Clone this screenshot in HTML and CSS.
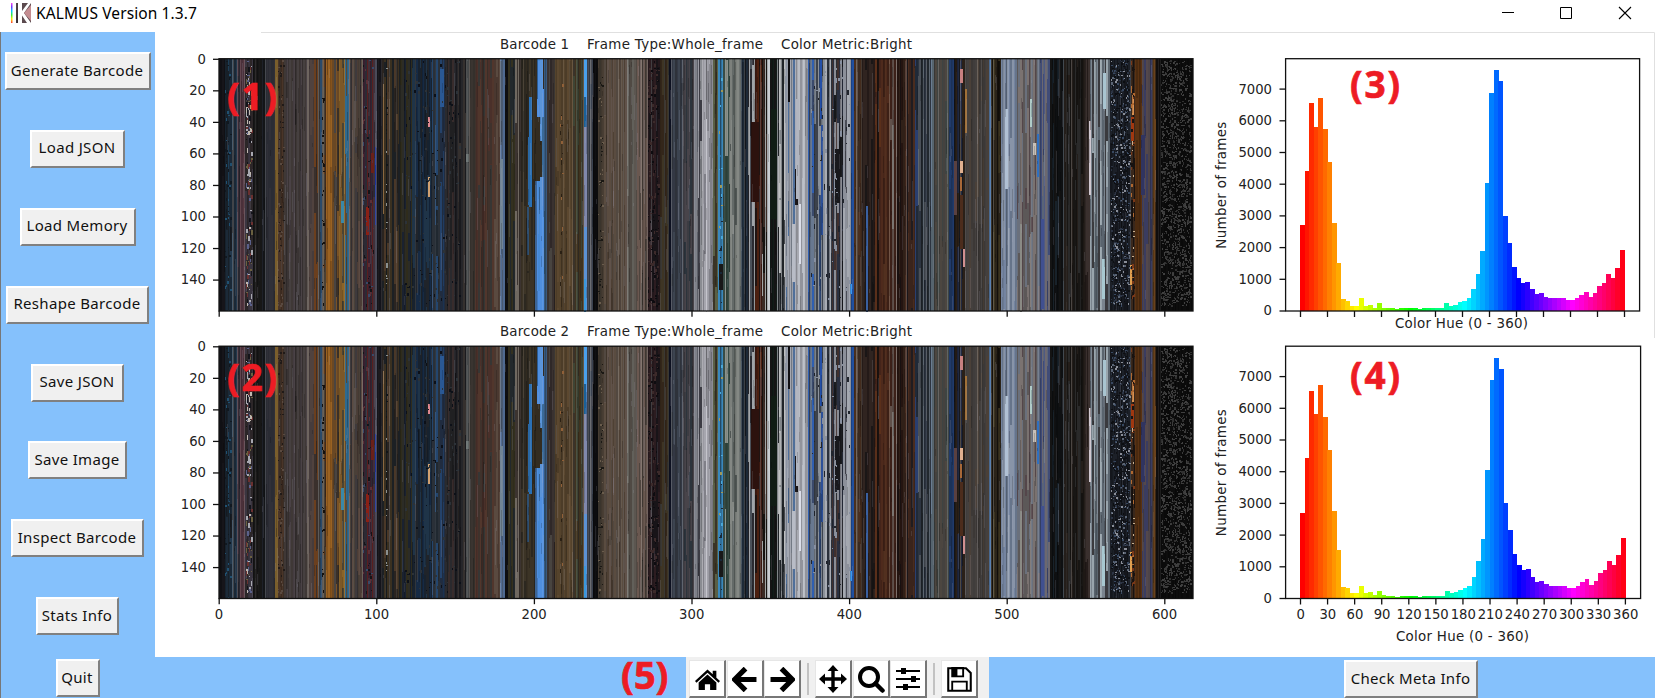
FILE: index.html
```html
<!DOCTYPE html>
<html lang="en">
<head>
<meta charset="utf-8">
<title>KALMUS Version 1.3.7</title>
<link rel="stylesheet" href="styles.css">
</head>
<body>
<div class="window">
  <header class="titlebar">
    <svg class="logo" width="20" height="20" viewBox="0 0 20 20">
      <defs><linearGradient id="rb" x1="0" y1="0" x2="0" y2="1"><stop offset="0" stop-color="#f4e"/><stop offset=".2" stop-color="#63f"/><stop offset=".4" stop-color="#0cf"/><stop offset=".6" stop-color="#3e3"/><stop offset=".8" stop-color="#fe0"/><stop offset="1" stop-color="#f33"/></linearGradient>
      <linearGradient id="dk" x1="0" y1="0" x2="1" y2="1"><stop offset="0" stop-color="#54474b"/><stop offset="1" stop-color="#221b20"/></linearGradient></defs>
      <rect width="1.500" height="20" fill="url(#rb)"/>
      <path d="M5 0h5v20H5z" fill="url(#dk)"/>
      <path d="M10 0h10v20H10z" fill="#5b4a4e"/>
      <path d="M7 0h4v8l6-8h3L13 10l7 10h-4L11 12.500V20H7z" fill="#fff"/>
      <path d="M20 2v16l-7-8z" fill="#c48d91"/>
    </svg>
    <span class="title">KALMUS Version 1.3.7</span>
    <svg class="controls" width="150" height="32" viewBox="1505 0 150 32" fill="none" stroke="#000" stroke-width="1">
      <path d="M1502 12.500h12M1560.500 7.500h11v11h-11z"/>
      <path d="M1619 7l12 12M1631 7l-12 12" stroke-width="1.100"/>
    </svg>
  </header>
  <div class="body">
    <nav class="sidebar">
      <button class="btn w146">Generate Barcode</button>
      <button class="btn w95">Load JSON</button>
      <button class="btn w116">Load Memory</button>
      <button class="btn w143">Reshape Barcode</button>
      <button class="btn w93">Save JSON</button>
      <button class="btn w99">Save Image</button>
      <button class="btn w133">Inspect Barcode</button>
      <button class="btn w83">Stats Info</button>
      <button class="btn w44 quit">Quit</button>
    </nav>
    <main class="main">
      <section class="figure">
        <div class="barcodes">
          <svg id="bar1" width="1050" height="290" viewBox="155 32 1050 290"></svg>
          <svg id="bar2" width="1050" height="335" viewBox="155 322 1050 335"></svg>
        </div>
        <div class="hists">
          <svg id="hist1" width="450" height="306" viewBox="1205 32 450 306"></svg>
          <svg id="hist2" width="450" height="319" viewBox="1205 338 450 319"></svg>
        </div>
      </section>
      <footer class="bottombar">
        <span class="mark">(5)</span>
        <div class="toolbar">
          <button class="tool"><svg viewBox="0 0 24 24"><path d="M12 2.500L0 13.500l1.400 1.500L12 5.500 22.600 15l1.400-1.500-3.500-3.300V3.500h-3.500V7z"/><path d="M12 7.200L3.500 14.800V22H9.500v-5.500h5V22h6v-7.200z"/></svg></button>
          <button class="tool"><svg viewBox="0 0 24 24"><path d="M13 1.500L2.500 12 13 22.500M3.500 12H23.500" fill="none" stroke="#000" stroke-width="5"/></svg></button>
          <button class="tool"><svg viewBox="0 0 24 24"><path d="M11 1.500L21.500 12 11 22.500M20.500 12H.5" fill="none" stroke="#000" stroke-width="5"/></svg></button>
          <i class="sep"></i>
          <button class="tool"><svg class="wide" viewBox="0 0 28 28"><path d="M14 0l5.500 6H15.700v6.300H22V8.500L28 14l-6 5.500v-3.800h-6.300V22h3.800L14 28l-5.500-6h3.800v-6.300H6v3.800L0 14l6-5.500v3.800h6.300V6H8.500z"/></svg></button>
          <button class="tool"><svg class="wide" viewBox="0 0 28 28"><circle cx="12" cy="12" r="9" fill="none" stroke="#000" stroke-width="4"/><path d="M18.500 18.500l7 7" stroke="#000" stroke-width="4.500" stroke-linecap="round"/></svg></button>
          <button class="tool"><svg class="wide" viewBox="0 0 28 28"><path d="M2 6h24M2 14h24M2 22h24" stroke="#000" stroke-width="2.200"/><path d="M7 3h5v6H7zM17 11h5v6h-5zM9 19h5v6H9z"/></svg></button>
          <i class="sep sep2"></i>
          <button class="tool"><svg viewBox="0 0 24 24"><path d="M1.200 1.200h17l4.600 4.600v17H1.200z" fill="none" stroke="#000" stroke-width="2"/><path d="M5 1h10.500v8H5zM5 22v-8h14v8" fill="none" stroke="#000" stroke-width="1.800"/><path d="M5 1h5v8H5z"/></svg></button>
        </div>
        <button class="btn meta w134">Check Meta Info</button>
      </footer>
    </main>
  </div>
</div>
<script src="charts.js"></script>
</body>
</html>
```
FILE: styles.css
```css
* { box-sizing: border-box; }
body { margin: 0; background: #fff; overflow: hidden; }
.window { width: 1655px; height: 698px; display: flex; flex-direction: column; }
.titlebar { height: 32px; display: flex; align-items: center; padding-left: 11px; background: #fff; }
.logo { margin-top: -7px; }
.title { flex: 1; margin: -7px 0 0 5px; font: 15.5px/24px "Noto Sans", sans-serif; color: #000; letter-spacing: 0.1px; white-space: nowrap; }
.controls { overflow: visible; }
.body { display: flex; height: 666px; border-left: 1px solid #777; }
.sidebar { width: 154px; padding: 20px 1px 0 0; background: #85c1fc; display: flex; flex-direction: column; align-items: center; gap: 39.900px; }
.btn { height: 38px; flex: none; padding: 0 1px 3px 0; border: 2px solid; border-color: #fff #808080 #808080 #fff; border-radius: 0; background: #f0f0f0; color: #111; font: 15px/30px "Noto Sans", sans-serif; letter-spacing: 0.33px; white-space: nowrap; }
.quit { margin-top: -16px; }
.w146 { width: 146px; } .w95 { width: 95px; } .w116 { width: 116px; } .w143 { width: 143px; }
.w93 { width: 93px; } .w99 { width: 99px; } .w133 { width: 133px; } .w83 { width: 83px; }
.w44 { width: 44px; } .w134 { width: 134px; }
.main { width: 1500px; display: flex; flex-direction: column; }
.figure { display: flex; height: 625px; background: #fff; }
.barcodes, .hists { display: flex; flex-direction: column; }
.barcodes svg, .hists svg { display: block; }
.figure text { font-family: "DejaVu Sans", sans-serif; font-size: 13.2px; fill: #222; }
.figure text.label { font-size: 13.4px; }
.figure text.note { font-family: "Open Sans", "Noto Sans", sans-serif; font-weight: 700; font-size: 37px; fill: #ed1c24; stroke: #ed1c24; stroke-width: 0.7px; }
.axis { fill: none; stroke: #111; stroke-width: 1.3; }
.hairline { fill: none; stroke: #e0e0e0; }
.stripes { shape-rendering: crispEdges; }
.bottombar { height: 41px; display: flex; align-items: flex-start; background: #85c1fc; }
.mark { width: 531px; padding-left: 466px; font: 700 38px/34px "Open Sans", "Noto Sans", sans-serif; color: #ed1c24; -webkit-text-stroke: 0.7px #ed1c24; }
.toolbar { width: 303px; height: 41px; padding: 3px 0 0 3px; display: flex; background: #f0f0f0; }
.tool { width: 37px; height: 38px; margin-right: 0.6px; padding: 1px 0 0; display: flex; align-items: center; justify-content: center; flex: none; background: #fff; border: 1px solid; border-width: 1px 2px 2px 1px; border-color: #e6e6e6 #777 #777 #e6e6e6; border-radius: 0; }
.tool svg { width: 25px; height: 25px; display: block; }
.tool svg.wide { width: 28px; height: 28px; }
.sep { width: 2px; height: 32px; margin: 3px 6px 0 5.500px; background: #c2c2c2; }
.sep2 { margin-left: 5px; }
.meta { margin: 3px 0 0 355px; }
```
FILE: charts.js
```js
const NS = 'http://www.w3.org/2000/svg';
const add = (p, n, a, t) => {
  const e = document.createElementNS(NS, n);
  for (const k in a) e.setAttribute(k, a[k]);
  if (t !== undefined) e.textContent = t;
  p.appendChild(e);
  return e;
};
let seed = 7;
const rnd = () => (seed = (seed * 16807) % 2147483647) / 2147483647;

// Colour bands: start x, then the colours that alternate inside the band.
const bands = [
  [219, '#16151a', '#101014'], [225, '#1c2a38', '#182028', '#1d3d55'], [230, '#1a2836', '#22384c', '#181c22'],
  [237, '#3a2a35', '#2a2830'], [240, '#55363f', '#4a303a'], [245, '#3a3540', '#2c2628'], [253, '#171717', '#1c1a1a'],
  [262, '#1d2028', '#131518'], [266, '#2a2c34', '#303038'], [275, '#7a5e2c'], [278, '#4a3528', '#3a2e26'],
  [284, '#3f3836', '#4a4246', '#3a3434', '#464040'], [307, '#6e6560'], [309, '#463c3c', '#50423e'], [314, '#6b3f1e', '#3a302c'],
  [318, '#3a3634', '#2a4a6a'], [323, '#5c3a1c', '#3c2a20', '#4a4034'], [326, '#9a6222', '#84521c'], [332, '#6a4824', '#4a4440', '#7a5226', '#3a3028'],
  [339, '#8a6428', '#7c5828', '#4a4434'], [345, '#2f6a90', '#5a4834'], [349, '#5c4a42', '#4a4038', '#3e3a3c'],
  [363, '#3a2030', '#2c2a34', '#5a1e1e', '#40303a'], [375, '#4a4a58'], [377, '#14141a', '#1c1a1e'],
  [382, '#2a2420', '#3a3020', '#1c2024', '#4a3828'], [400, '#2f2c1c', '#2c2c26', '#1a2230'],
  [412, '#18222e', '#1f3448', '#20242a', '#162a44'], [432, '#24466e', '#2a3038', '#202830'], [440, '#24426a', '#202c40'],
  [445, '#2a2a2e', '#202022', '#382c2c'], [455, '#1a1a1e', '#26262a', '#35302e'], [466, '#55585a'], [469, '#3a3430', '#34302c'],
  [475, '#3f322c', '#4a302a', '#373634', '#51362c'], [494, '#4a3830', '#5a4a40'], [500, '#506a90', '#4a5a70'],
  [505, '#0e0e10'], [508, '#33301f', '#22282c'], [515, '#6f6860', '#3c3430'], [521, '#2c2820', '#3c3426'],
  [535, '#332c20'], [537, '#4f8fe0', '#468ad6', '#5a94d8'], [544, '#3a5a80', '#2c4a66'], [547, '#3a3230', '#484440', '#2f2828'],
  [555, '#55432c', '#4c3c28', '#5c4830'], [573, '#3a332a', '#40331f', '#3e4434'], [584, '#5c92d4'], [587, '#3a4250', '#4a4c54'],
  [593, '#0c0c0e', '#101012'], [598, '#463c32', '#3a342c'], [603, '#5a4c40', '#524840', '#4e4034', '#60524a'],
  [627, '#62605a', '#5c5650', '#504a44'], [637, '#6a5850', '#4e443e', '#726460'], [648, '#24181c', '#2c1c20', '#181418'],
  [660, '#33261a', '#3e3524', '#3a3834'], [669, '#0c1020'], [671, '#333844', '#3c4450', '#2e323a'], [683, '#3c3c42', '#48444a', '#2c343c'],
  [694, '#8a8c94', '#727680'], [698, '#9a9aa2', '#3c3c44', '#8a8c92'], [703, '#9a9aa2', '#a6a6ae', '#808088'], [713, '#5a6046', '#3a3426'], [718, '#3a88bc', '#2a5a7c'],
  [723, '#384c46', '#8a928c', '#30443c'], [730, '#7c807c', '#848884', '#646a68', '#505654'], [741, '#1c2836', '#243444', '#12161c'],
  [748, '#2a2a30', '#a0a4a8', '#4a5058'], [755, '#3a1810', '#4c2010', '#201412'], [762, '#16120f', '#3a2a24', '#a0a4a4'],
  [767, '#c8ccd0'], [770, '#121c18', '#141414'], [777, '#808488', '#202428', '#b0b2b4'], [785, '#a4a8b2', '#8c94a2', '#9a9ea8', '#4f6f9a'],
  [796, '#a8aab2', '#b8bcc4', '#92949c'], [808, '#2f5fb0', '#3a4a6c', '#687890'], [814, '#7a828c', '#3c424c', '#8a9098', '#2c4470'],
  [825, '#a8acb4', '#2a303a', '#8e949e'], [832, '#40302e', '#2a3040', '#8a8c94', '#1a1c20'], [843, '#a4a8b0', '#8c909a', '#4a4c56'],
  [851, '#2050a0'], [854, '#4a3020', '#54463c', '#3a2a20'], [862, '#241a18', '#302420', '#1a1616'], [875, '#5a2f1a', '#1a1210', '#44241a'],
  [881, '#4e2a1c', '#3c2016', '#52301f'], [890, '#3c2018', '#60504a'], [897, '#241410', '#302018', '#181010'],
  [905, '#4a2c1e', '#3a241c', '#201c20'], [915, '#2a3f70', '#202a38'], [918, '#2c3440', '#4a5058', '#22282e', '#5c6670'],
  [931, '#6a7c90', '#56646e'], [934, '#45423f', '#4c4640', '#3e4442'], [949, '#203a6a', '#1c3258'], [954, '#16181e', '#2a2018', '#202840'],
  [965, '#403d3c', '#44403e', '#4a4038', '#3c3836'], [989, '#5a80b0'], [991, '#2b241a', '#14100c', '#3c3420'], [1001, '#7484a0', '#66748a', '#8894a8'],
  [1017, '#5c5858', '#6a707c', '#7a7270', '#54464a'], [1038, '#5a6478', '#404c78', '#6c6870'], [1050, '#141414', '#0e1012', '#18222a'],
  [1064, '#241e1a', '#181614', '#2a2a2a', '#141210'], [1085, '#3a302e', '#241c1a'], [1090, '#5a646e', '#7a848e', '#3a3a3e', '#98a4ac'],
  [1110, '#14161c', '#1c2028'], [1131, '#3a281c', '#181210'], [1135, '#5a3212', '#4a2a10'], [1142, '#54484c', '#4e4448', '#3a3c60'],
  [1153, '#6a421c', '#3a2818'], [1156, '#0f0d0d'], [1160, '#0a0a0a', '#0d0d0d'], [1193]
];

// Short stretches that stand out: x, y, width, height, colour.
const spots = [
  [529, 38, 3, 110, '#2a70b4'], [528, 78, 2, 68, '#2a68a4'], [527, 148, 2, 48, '#2f4f70'],
  [537, 58, 3, 64, '#332c20'], [540, 82, 3, 36, '#332c20'], [535, 122, 2, 130, '#3c6494'], [542, 58, 2, 60, '#3a6a98'],
  [584, 0, 3, 38, '#4aa0ec'], [584, 38, 2, 30, '#1a6098'], [537, 0, 1, 40, '#2c5c94'], [543, 0, 1, 30, '#332c20'],
  [584, 68, 3, 100, '#8088ac'], [584, 220, 2, 33, '#3a98dc'], [428, 58, 2, 10, '#e08890'], [428, 118, 2, 20, '#d0a070'],
  [375, 88, 1, 78, '#1a35a0'], [366, 148, 3, 28, '#8a2015'], [371, 94, 3, 20, '#6a2018'], [500, 100, 3, 90, '#708494'],
  [788, 0, 2, 43, '#101014'], [795, 110, 3, 36, '#1a1618'], [796, 40, 3, 100, '#b2b6c0'], [792, 165, 3, 58, '#b8bcc6'],
  [835, 90, 5, 54, '#18181c'], [771, 50, 6, 110, '#101c14'], [751, 63, 8, 80, '#2c120e'], [820, 0, 2, 60, '#2450a8'],
  [821, 66, 2, 110, '#2c5098'], [866, 147, 2, 106, '#3a60a0'], [850, 225, 2, 10, '#3a98f0'], [892, 66, 2, 104, '#7a7470'],
  [960, 10, 3, 14, '#c88080'], [960, 102, 3, 12, '#e0b090'], [960, 118, 2, 14, '#a86838'], [965, 30, 2, 44, '#a07038'], [963, 190, 2, 18, '#d09090'],
  [960, 136, 3, 54, '#4c2c1c'], [954, 102, 3, 54, '#5a4040'], [1005, 50, 3, 80, '#b0c0d4'], [1037, 75, 2, 43, '#3070c0'],
  [1033, 84, 3, 12, '#c8c0b8'], [1030, 40, 2, 28, '#b0ccc8'], [1089, 62, 2, 74, '#d0c8d0'], [1103, 14, 3, 36, '#a8c4d0'],
  [1102, 200, 3, 40, '#a8c8d0'], [1131, 58, 3, 24, '#a03810'], [1132, 36, 2, 20, '#d89050'], [1130, 206, 2, 20, '#e0a050'],
  [1141, 76, 4, 60, '#303460'], [1020, 165, 2, 88, '#8a8a84'], [1041, 160, 3, 90, '#405090'], [440, 10, 4, 38, '#2a5894'],
  [341, 142, 3, 22, '#3a88a8'], [719, 205, 4, 26, '#181818'], [799, 145, 2, 60, '#dcdfea'], [706, 60, 1, 193, '#c4c4cc'],
  [383, 25, 1, 130, '#8a6840'], [466, 95, 3, 8, '#707878']
];

function buildStripes(g) {
  add(g, 'rect', { x: 219, y: 0, width: 974, height: 252, fill: '#222' });
  for (let i = 0; i < bands.length - 1; i++) {
    const [x0, ...cols] = bands[i], x1 = bands[i + 1][0];
    let x = x0, k = 0;
    while (x < x1) {
      const w = Math.min(x1 - x, rnd() < 0.45 ? 1 : 2);
      const c = cols[k++ % cols.length];
      add(g, 'rect', { x, y: 0, width: w, height: 252, fill: c });
      let runs = Math.floor(rnd() * 4);
      while (runs-- > 0 && cols.length > 1) {
        const y = Math.floor(rnd() * 235), h = Math.min(252 - y, 12 + Math.floor(rnd() * 90));
        add(g, 'rect', { x, y, width: w, height: h, fill: cols[Math.floor(rnd() * cols.length)] });
      }
      if (rnd() < 0.3) add(g, 'rect', { x, y: 0, width: 1, height: 252, fill: rnd() < 0.6 ? '#000' : '#fff', opacity: rnd() < 0.6 ? 0.18 : 0.08 });
      x += w;
    }
  }
  for (const [x, y, width, height, fill] of spots) add(g, 'rect', { x, y, width, height, fill });
  // Faint short streaks over the whole strip.
  for (let i = 0; i < 900; i++) {
    const y = Math.floor(rnd() * 240);
    add(g, 'rect', { x: 220 + Math.floor(rnd() * 938), y, width: 1, height: Math.min(252 - y, 3 + Math.floor(rnd() * 40)), fill: rnd() < 0.65 ? '#000' : '#aab', opacity: 0.16 });
  }
  speckle(g, 246, 252, 150, ['#6a6040', '#a8a8b0', '#5a608a', '#14141a', '#6a3030', '#c0b8b0'], 5);
  speckle(g, 1111, 1130, 760, ['#5a6474', '#2c3444', '#8a8e98', '#0c0e12', '#384860', '#0e1014'], 2);
  speckle(g, 1131, 1134, 50, ['#b06830', '#7a3818', '#c8b090', '#181210'], 4);
  speckle(g, 1161, 1191, 1300, ['#3a3a3a', '#404040', '#303030'], 2);
  speckle(g, 648, 659, 160, ['#0e0c10', '#3c2a2a'], 3);
  speckle(g, 598, 603, 60, ['#1a1814', '#6a5c4c'], 2);
  speckle(g, 278, 284, 80, ['#5a4a40', '#201a18'], 2);
  speckle(g, 560, 563, 18, ['#906038', '#2a2014'], 5);
  speckle(g, 386, 387, 22, ['#8a9090', '#101418'], 3);
  speckle(g, 225, 231, 60, ['#205070', '#101820'], 3);
  speckle(g, 363, 374, 60, ['#5a3038', '#141418', '#3a4868'], 4);
  speckle(g, 322, 324, 24, ['#14100c'], 4);
  speckle(g, 404, 460, 160, ['#0c1018', '#2c3238'], 3);
  speckle(g, 719, 722, 20, ['#a09858', '#4aa8d8', '#182838'], 3);
  speckle(g, 810, 850, 80, ['#8890a0', '#20242c'], 6);
}
function speckle(g, x0, x1, n, cols, h) {
  for (let i = 0; i < n; i++)
    add(g, 'rect', { x: x0 + Math.floor(rnd() * (x1 - x0)), y: 1 + Math.floor(rnd() * 246), width: rnd() < 0.4 ? 2 : 1, height: 1 + Math.floor(rnd() * h), fill: cols[Math.floor(rnd() * cols.length)] });
}

function barcode(id, top, n, labels, noteY, titleY) {
  const s = document.getElementById(id);
  if (n === 1) buildStripes(add(s, 'g', { id: 'stripes', class: 'stripes', transform: 'translate(0 59)' }));
  else add(s, 'use', { href: '#stripes', y: top - 59 });
  add(s, 'rect', { class: 'axis', x: 219, y: top, width: 974, height: 252.3 });
  add(s, 'text', { class: 'label', x: 500, y: titleY, textLength: 69 }, 'Barcode ' + n);
  add(s, 'text', { class: 'label', x: 587, y: titleY, textLength: 176 }, 'Frame Type:Whole_frame');
  add(s, 'text', { class: 'label', x: 781, y: titleY, textLength: 131 }, 'Color Metric:Bright');
  for (let v = 0; v <= 140; v += 20) {
    const y = top + 0.6 + v * 1.577;
    add(s, 'path', { class: 'axis', d: `M213 ${y}h6` });
    add(s, 'text', { x: 206, y: y + 4.4, 'text-anchor': 'end' }, v);
  }
  for (let v = 0; v <= 600; v += 100) {
    const x = 219.2 + v * 1.576;
    add(s, 'path', { class: 'axis', d: `M${x} ${top + 252}v6` });
    if (labels) add(s, 'text', { x: x - 0.3, y: 619, 'text-anchor': 'middle' }, v);
  }
  add(s, 'text', { class: 'note', x: 227, y: noteY, textLength: 50 }, `(${n})`);
}

const counts = [2700,4430,6560,5820,6720,5740,4700,2770,1520,370,330,170,170,400,170,200,100,240,100,90,90,60,90,90,80,90,60,90,90,90,90,90,240,170,200,280,320,400,690,1170,1880,4050,6880,7590,7240,3010,2150,1390,1050,890,920,690,530,560,450,410,410,410,400,340,340,400,520,600,440,560,800,890,1170,1050,1370,1920];

function histogram(id, top, n, labels, noteY, labelY) {
  const s = document.getElementById(id), base = top + 252.3, sx = labels ? 0.9025 : 0.9;
  const bw = sx * 5, g = add(s, 'g', { class: 'stripes' });
  counts.forEach((c, i) => {
    const h = c * 0.0317;
    add(g, 'rect', { x: 1300.3 + i * bw, y: base - h, width: bw + 0.3, height: h, fill: `hsl(${i * 5} 100% 50%)` });
  });
  add(s, 'rect', { class: 'axis', x: 1285.6, y: top, width: labels ? 355 : 354, height: 252.3 });
  for (let v = 0; v <= 7000; v += 1000) {
    const y = base - v * 0.0317;
    add(s, 'path', { class: 'axis', d: `M1279.500 ${y}h6` });
    add(s, 'text', { x: 1272, y: y + 4.4, 'text-anchor': 'end' }, v);
  }
  for (let v = 0; v <= 360; v += 30) {
    const x = 1300.5 + v * sx;
    add(s, 'path', { class: 'axis', d: `M${x} ${base}v6` });
    if (labels) add(s, 'text', { x: x + 0.3, y: 619, 'text-anchor': 'middle' }, v);
  }
  add(s, 'text', { class: 'label', x: labels ? 1396 : 1395, y: labelY, textLength: 133 }, 'Color Hue (0 - 360)');
  add(s, 'text', { class: 'label', transform: `translate(1226 ${top + 126.5}) rotate(-90)`, 'text-anchor': 'middle', textLength: 127 }, 'Number of frames');
  add(s, 'text', { class: 'note', x: 1350, y: noteY, textLength: 50 }, `(${n})`);
}

barcode('bar1', 58.7, 1, false, 109.5, 49);
barcode('bar2', 346.2, 2, true, 391, 335.5);
histogram('hist1', 58.7, 3, false, 98, 328);
histogram('hist2', 346.2, 4, true, 389, 640.5);
add(document.getElementById('bar1'), 'path', { class: 'hairline', d: 'M261 32.500H1205' });
add(document.getElementById('hist1'), 'path', { class: 'hairline', d: 'M1205 32.500H1654.500V338' });
```
